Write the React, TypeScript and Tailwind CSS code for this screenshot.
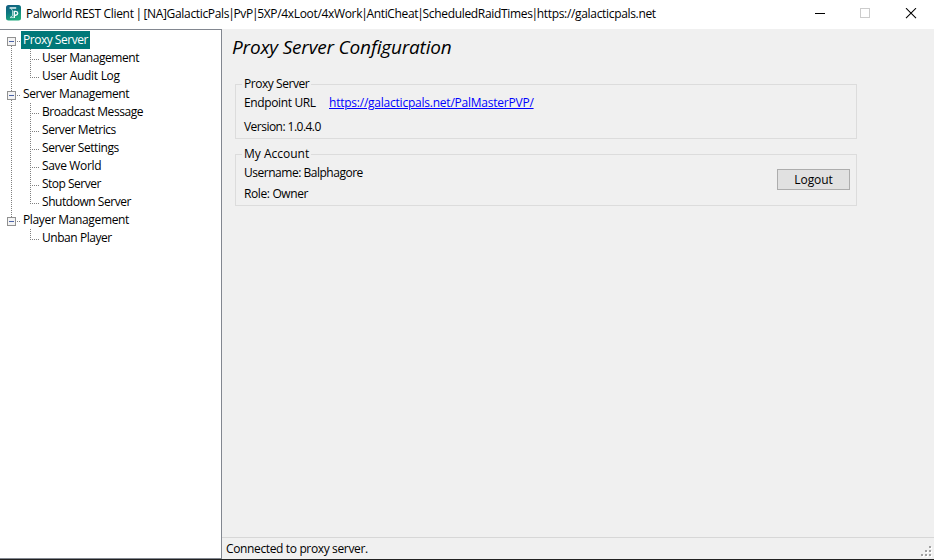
import { Fragment } from "react";

type TreeItem = { label: string; tracking: string; selected?: boolean; children: { label: string; tracking: string }[] };

const tree: TreeItem[] = [
  {
    label: "Proxy Server",
    tracking: "tracking-[-0.48px]",
    selected: true,
    children: [
      { label: "User Management", tracking: "tracking-[-0.42px]" },
      { label: "User Audit Log", tracking: "tracking-[-0.3px]" },
    ],
  },
  {
    label: "Server Management",
    tracking: "tracking-[-0.42px]",
    children: [
      { label: "Broadcast Message", tracking: "tracking-[-0.42px]" },
      { label: "Server Metrics", tracking: "tracking-[-0.45px]" },
      { label: "Server Settings", tracking: "tracking-[-0.45px]" },
      { label: "Save World", tracking: "tracking-[-0.35px]" },
      { label: "Stop Server", tracking: "tracking-[-0.5px]" },
      { label: "Shutdown Server", tracking: "tracking-[-0.45px]" },
    ],
  },
  {
    label: "Player Management",
    tracking: "tracking-[-0.35px]",
    children: [{ label: "Unban Player", tracking: "tracking-[-0.45px]" }],
  },
];

const titleParts = ["[NA]GalacticPals", "PvP", "5XP/4xLoot/4xWork", "AntiCheat", "ScheduledRaidTimes", "https://galacticpals.net"];

const dotsY = "bg-[repeating-linear-gradient(to_bottom,#808080_0_1px,transparent_1px_2px)]";
const dotsX = "bg-[repeating-linear-gradient(to_right,#808080_0_1px,transparent_1px_2px)]";

function AppIcon() {
  return (
    <svg width="15" height="16" viewBox="0 0 15 16" className="block">
      <defs>
        <linearGradient id="tile" x1="0" y1="0" x2="0.4" y2="1">
          <stop offset="0" stopColor="#155a80" />
          <stop offset="0.5" stopColor="#0c7880" />
          <stop offset="1" stopColor="#1ca87c" />
        </linearGradient>
      </defs>
      <rect width="15" height="15.5" rx="2.5" fill="url(#tile)" />
      <path d="M3.6 3h6.6" fill="none" stroke="#e8f6f6" strokeWidth="1.5" />
      <path d="M5 3.4l1.6 2.4v5L4 12.6h3.6" fill="none" stroke="#c4e8e6" strokeWidth="0.9" />
      <path d="M8.3 13V6.4h1.4q2 .2 2 1.9t-2 1.9H8.3" fill="none" stroke="#f2fbfb" strokeWidth="1.4" />
    </svg>
  );
}

function Expander() {
  return (
    <svg width="9" height="9" className="block" shapeRendering="crispEdges">
      <rect x="0.5" y="0.5" width="8" height="8" fill="#f4f4f4" stroke="#919191" />
      <path d="M2 4.5h5" stroke="#4b63a7" />
    </svg>
  );
}

function Branch({ item, last }: { item: TreeItem; last: boolean }) {
  return (
    <li className="relative">
      {!last && <span className={`absolute top-[15px] bottom-[-6px] left-[11px] w-px ${dotsY}`} />}
      <div className="flex h-[18px] items-center pl-[7px]">
        <span className="mt-[3px]"><Expander /></span>
        <span className={`ml-px mt-[2px] h-px w-[4px] ${dotsX}`} />
        <span className={`flex h-[18px] items-center whitespace-nowrap pl-[2px] ${item.tracking} ${item.selected ? "w-[69px] bg-[#007878] text-white" : ""}`}>
          <span>{item.label}</span>
        </span>
      </div>
      <ul>
        {item.children.map((child, i) => (
          <li key={child.label} className="flex h-[18px] pl-[30px]">
            <span className={`w-px ${dotsY} ${i === item.children.length - 1 ? "h-[11px]" : "h-[18px]"}`} />
            <span className={`ml-px mt-[10px] h-px w-[7px] ${dotsX}`} />
            <span className={`ml-[3px] whitespace-nowrap leading-[18px] ${child.tracking}`}>{child.label}</span>
          </li>
        ))}
      </ul>
    </li>
  );
}

export default function App() {
  return (
    <div className="flex h-[560px] w-[934px] flex-col overflow-hidden border-b border-[#202020] bg-[#f0f0f0] font-['Open_Sans','Noto_Sans',sans-serif] text-[12px] leading-[16px] text-black">
      <header className="flex h-[29px] shrink-0 bg-white pl-[6px]">
        <span className="mt-[5px]"><AppIcon /></span>
        <h1 className="ml-[5px] mt-[6px] whitespace-nowrap tracking-[-0.33px]">
          Palworld REST Client <span className="-mx-px">|</span>{" "}
          {titleParts.map((part, i) => (
            <Fragment key={part}>
              {i > 0 && <span className="-mx-px">|</span>}
              {part}
            </Fragment>
          ))}
        </h1>
        <svg width="104" height="12" className="ml-auto mr-[16px] mt-[8px] shrink-0" fill="none">
          <path d="M1 5.5h10" stroke="#000" shapeRendering="crispEdges" />
          <rect x="46.5" y="0.5" width="9" height="9" stroke="#ccc" />
          <path d="M92 .2l10 10M102 .2l-10 10" stroke="#000" strokeWidth="1.1" />
        </svg>
      </header>
      <div className="flex min-h-0 flex-1">
        <nav className="w-[222px] shrink-0 border-t border-r border-b border-[#828790] bg-white pt-px">
          <ul>
            {tree.map((item, i) => (
              <Branch key={item.label} item={item} last={i === tree.length - 1} />
            ))}
          </ul>
        </nav>
        <div className="flex flex-1 flex-col">
          <main className="flex flex-1 flex-col pl-[13px]">
            <h2 className="-ml-[3px] mt-[5px] h-[26px] whitespace-nowrap text-[19px] italic leading-[26px] tracking-[-0.18px]">Proxy Server Configuration</h2>
            <section className="mt-[24px] h-[55px] w-[622px] border border-[#dcdcdc] pl-[8px]">
              <h3 className="-ml-[2px] -mt-[9px] h-[16px] w-[69px] whitespace-nowrap bg-[#f0f0f0] pl-[2px] tracking-[-0.45px]">Proxy Server</h3>
              <div className="mt-[3px] flex h-[16px] whitespace-nowrap">
                <span className="w-[85px] tracking-[-0.37px]">Endpoint URL</span>
                <a className="tracking-[-0.23px] text-[#0000ff] underline">https://galacticpals.net/PalMasterPVP/</a>
              </div>
              <p className="mt-[8px] tracking-[-0.53px]">Version: 1.0.4.0</p>
            </section>
            <section className="mt-[15px] h-[52px] w-[622px] border border-[#dcdcdc] pl-[8px]">
              <h3 className="-ml-[2px] -mt-[9px] h-[16px] w-[69px] whitespace-nowrap bg-[#f0f0f0] pl-[2px] tracking-[0px]">My Account</h3>
              <div className="flex justify-between pr-[6px]">
                <div className="mt-[3px] flex flex-col gap-[5px]">
                  <p className="tracking-[-0.48px]">Username: Balphagore</p>
                  <p className="tracking-[-0.38px]">Role: Owner</p>
                </div>
                <button className="mt-[7px] h-[21px] w-[73px] border border-[#adadad] bg-[#e1e1e1] leading-[19px] tracking-[-0.1px]">Logout</button>
              </div>
            </section>
          </main>
          <footer className="flex h-[22px] justify-between border-t border-[#d7d7d7] pl-[4px]">
            <span className="mt-[3px] tracking-[-0.36px]">Connected to proxy server.</span>
            <svg width="13" height="13" className="mt-[8px]" shapeRendering="crispEdges">
              {[[8, 0], [4, 4], [8, 4], [0, 8], [4, 8], [8, 8]].map(([x, y]) => (
                <g key={`${x}-${y}`}>
                  <rect x={x + 1} y={y + 1} width="2" height="2" fill="#fff" />
                  <rect x={x} y={y} width="2" height="2" fill="#a0a0a0" />
                </g>
              ))}
            </svg>
          </footer>
        </div>
      </div>
    </div>
  );
}
